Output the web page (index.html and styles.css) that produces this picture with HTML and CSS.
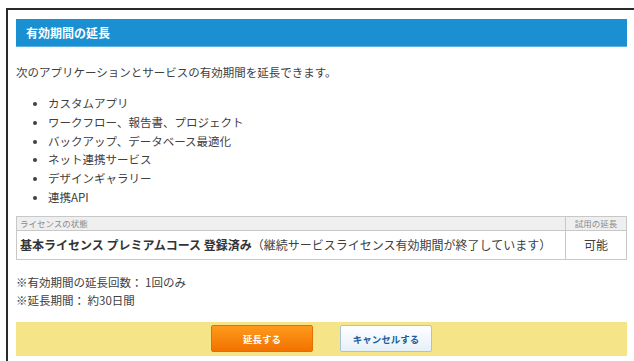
FILE: index.html
```html
<!DOCTYPE html>
<html lang="ja">
<head>
<meta charset="utf-8">
<link rel="stylesheet" href="styles.css">
</head>
<body>
<div class="frame">
  <div class="panel">
    <h1 class="title">有効期間の延長</h1>
    <p class="intro">次のアプリケーションとサービスの有効期間を延長できます。</p>
    <ul class="apps">
      <li>カスタムアプリ</li>
      <li>ワークフロー、報告書、プロジェクト</li>
      <li>バックアップ、データベース最適化</li>
      <li>ネット連携サービス</li>
      <li>デザインギャラリー</li>
      <li>連携API</li>
    </ul>
    <table class="lic">
      <thead>
        <tr><th class="c-state">ライセンスの状態</th><th class="c-ext">試用の延長</th></tr>
      </thead>
      <tbody>
        <tr><td class="c-state"><b>基本ライセンス プレミアムコース 登録済み</b>（継続サービスライセンス有効期間が終了しています）</td><td class="c-ext">可能</td></tr>
      </tbody>
    </table>
    <div class="notes">
      <p>※有効期間の延長回数： 1回のみ</p>
      <p>※延長期間： 約30日間</p>
    </div>
    <div class="actions">
      <button class="btn btn-primary">延長する</button>
      <button class="btn btn-cancel">キャンセルする</button>
    </div>
  </div>
</div>
</body>
</html>
```

FILE: styles.css
```css
html, body {
  margin: 0;
  padding: 0;
  background: #fff;
}
body {
  font-family: "Noto Sans CJK JP", "Noto Sans", sans-serif;
  color: #404040;
  font-size: 11.5px;
  overflow: hidden;
  width: 634px;
  height: 361px;
}
.frame {
  margin: 8px 0 0 6px;
  border-top: 2px solid #2a2a2a;
  border-left: 2px solid #2a2a2a;
  height: 351px;
  overflow: hidden;
}
.panel {
  width: 611px;
  padding: 9px 0 0 8px;
}
.title {
  margin: 0;
  height: 28px;
  line-height: 28px;
  background: #1a8fd1;
  color: #fff;
  font-size: 12px;
  font-weight: bold;
  padding-left: 10px;
  border-bottom: 1px solid #5fb2e0;
  box-sizing: border-box;
}
.intro {
  margin: 15px 0 0 0;
  line-height: 20px;
}
.apps {
  margin: 12px 0 0 0;
  padding: 0 0 0 32px;
  line-height: 18.8px;
}
.lic {
  margin-top: 9px;
  width: 611px;
  border-collapse: collapse;
}
.lic th, .lic td {
  border: 1px solid #c8c8c8;
}
.lic th {
  background: #efefef;
  color: #8a8a8a;
  font-size: 8.5px;
  font-weight: normal;
  height: 13px;
  line-height: 13px;
  padding: 0 3px;
  text-align: left;
}
.lic th.c-ext {
  text-align: center;
  padding: 0;
}
.lic td {
  height: 28px;
  padding: 0 3px;
  font-size: 12px;
}
.lic td b {
  font-weight: bold;
  color: #333;
}
.lic .c-ext {
  width: 54px;
  text-align: center;
}
.notes {
  margin-top: 13px;
}
.notes p {
  margin: 0;
  line-height: 18px;
}
.actions {
  margin-top: 13px;
  height: 34px;
  background: #f6e488;
  display: flex;
  align-items: center;
  padding-left: 195px;
  gap: 27px;
}
.btn {
  height: 27px;
  font-family: "Noto Sans CJK JP", sans-serif;
  font-size: 9.5px;
  font-weight: bold;
  border-radius: 2px;
  padding: 0;
}
.btn-primary {
  width: 102px;
  color: #fff;
  background: linear-gradient(#ff9a1c, #f27200);
  border: 1px solid #e07000;
}
.btn-cancel {
  width: 92px;
  color: #1d5d9c;
  background: linear-gradient(#ffffff, #e6f0f8);
  border: 1px solid #a9c3d8;
}
```
